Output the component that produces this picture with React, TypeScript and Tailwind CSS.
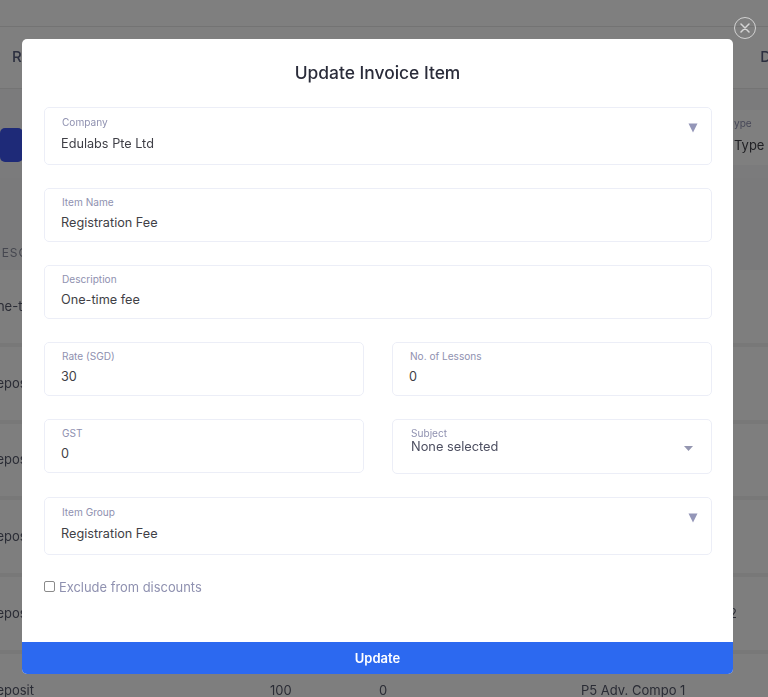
import React from "react";

function Field({ label, value, h = "h-[54px]", caret = false, labelTop = "pt-[7px]", gap = "mt-[5px]" }: { label: string; value: string; h?: string; caret?: boolean; labelTop?: string; gap?: string }) {
  return (
    <div className={`relative ${h} border border-[#eceef7] rounded-[5px] bg-white pl-[16px] pr-[16px] ${labelTop}`}>
      <div className="pl-[1px] text-[10.1px] leading-[13px] text-[#8f91b0]">{label}</div>
      <div className={`${gap} text-[12.7px] leading-[18px] text-[#3f3f46]`}>{value}</div>
      {caret && (
        <svg className="absolute right-[13px] top-[15px]" width="10" height="10" viewBox="0 0 10 10">
          <path d="M0.5 0.5H9.5L5 9.5Z" fill="#9496b8" />
        </svg>
      )}
    </div>
  );
}

function Row({ h, text }: { h: string; text: string }) {
  return (
    <div className={`${h} flex shrink-0 items-center overflow-hidden border-b-4 border-[#f0f0f0] bg-[#fdfdfd] text-[13px] text-[#55586a]`}>
      <span className="ml-[-13px]">{text}</span>
    </div>
  );
}

export default function App() {
  return (
    <div className="relative h-[697px] w-[768px] overflow-hidden bg-white font-['Inter',sans-serif]">
      {/* page behind the dialog */}
      <div className="flex h-full flex-col blur-[0.5px]">
        <div className="h-[27px] shrink-0 border-b border-[#e6e6e6] bg-white" />
        <div className="flex h-[62px] shrink-0 items-center justify-between border-b border-[#e8e8e8] bg-white pl-[12px] text-[15px] font-medium text-[#5a6080]">
          <span>R</span>
          <span className="mr-[-3px]">D</span>
        </div>
        <div className="flex h-[89px] shrink-0 items-start justify-between bg-[#f7f7f8]">
          <div className="mt-[39px] h-[34px] w-[23px] rounded-[5px] bg-[#3c55f0]" />
          <div className="mt-[21px] flex h-[55px] w-[64px] flex-col bg-white pl-[30px] pt-[7px]">
            <span className="text-[10.1px] leading-[13px] text-[#8f91b0]">ype</span>
            <span className="mt-[6px] whitespace-nowrap text-[13px] leading-[18px] text-[#43434a]">Type</span>
          </div>
        </div>
        <div className="h-[92px] shrink-0 bg-[#f4f5f6]">
          <div className="mt-[44px] h-[48px] pt-[23px] text-[12px] leading-[16px] tracking-[1px] text-[#8a8d9e]">
            <span className="ml-[-8px]">DESC</span>
          </div>
        </div>
        <Row h="h-[77px]" text="One-time" />
        <Row h="h-[77px]" text="Deposit" />
        <Row h="h-[76px]" text="Deposit" />
        <Row h="h-[77px]" text="Deposit" />
        <div className="flex h-[77px] shrink-0 items-center justify-between overflow-hidden border-b-4 border-[#f0f0f0] bg-[#fdfdfd] text-[13px] text-[#55586a]">
          <span className="ml-[-13px]">Deposit</span>
          <span className="mr-[31px]">2</span>
        </div>
        <div className="flex flex-1 items-center overflow-hidden bg-[#fdfdfd] pt-[30px] text-[13px] text-[#55586a]">
          <span className="ml-[-13px] w-[283px]">Deposit</span>
          <span className="w-[109px]">100</span>
          <span className="w-[202px]">0</span>
          <span>P5 Adv. Compo 1</span>
        </div>
      </div>

      {/* overlay */}
      <div className="absolute inset-0 bg-black/50" />

      {/* close */}
      <button className="absolute left-[734px] top-[17px] flex h-[22px] w-[22px] items-center justify-center rounded-full border-[1.5px] border-[#d2d2d2]">
        <svg width="10" height="10" viewBox="0 0 10 10">
          <path d="M1 1L9 9M9 1L1 9" stroke="#d6d6d6" strokeWidth="1.5" strokeLinecap="round" />
        </svg>
      </button>

      {/* dialog */}
      <div className="absolute left-[22px] top-[39px] flex h-[635px] w-[711px] flex-col overflow-hidden rounded-[5px] bg-white blur-[0.3px]">
        <h2 className="mt-[23px] h-[45px] shrink-0 text-center text-[17.4px] font-medium leading-[22px] text-[#2a2c3a]">Update Invoice Item</h2>
        <div className="flex flex-1 flex-col pl-[22px] pr-[21px]">
          <Field label="Company" value="Edulabs Pte Ltd" h="h-[58px]" caret labelTop="pt-[8px]" gap="mt-[6px]" />
          <div className="h-[23px]" />
          <Field label="Item Name" value="Registration Fee" h="h-[54px]" />
          <div className="h-[23px]" />
          <Field label="Description" value="One-time fee" h="h-[54px]" />
          <div className="h-[23px]" />
          <div className="grid grid-cols-2 gap-[28px]">
            <Field label="Rate (SGD)" value="30" />
            <Field label="No. of Lessons" value="0" />
          </div>
          <div className="h-[23px]" />
          <div className="grid grid-cols-2 gap-[28px]">
            <Field label="GST" value="0" />
            <div className="relative h-[55px] rounded-[5px] border border-[#eceef7] pl-[18px] pt-[7px]">
              <div className="text-[10.1px] leading-[13px] text-[#8f91b0]">Subject</div>
              <div className="text-[12.8px] leading-[13px] text-[#4c4e60]">None selected</div>
              <svg className="absolute right-[18px] top-[26px]" width="9" height="5" viewBox="0 0 9 5">
                <path d="M0 0H9L4.5 5Z" fill="#9496b0" />
              </svg>
            </div>
          </div>
          <div className="h-[23px]" />
          <Field label="Item Group" value="Registration Fee" h="h-[58px]" caret labelTop="pt-[8px]" gap="mt-[6px]" />
          <label className="mt-[23px] flex items-start text-[12.9px] leading-[20px] text-[#8f91b0]">
            <input type="checkbox" className="m-0 mt-[3px] h-[11px] w-[11px] appearance-none rounded-[2px] border border-[#8a8a8a] bg-white" />
            <span className="ml-[4px]">Exclude from discounts</span>
          </label>
        </div>
        <button className="h-[32px] shrink-0 pt-[1px] bg-[#2c69f0] text-[13px] font-semibold text-white">Update</button>
      </div>
    </div>
  );
}
